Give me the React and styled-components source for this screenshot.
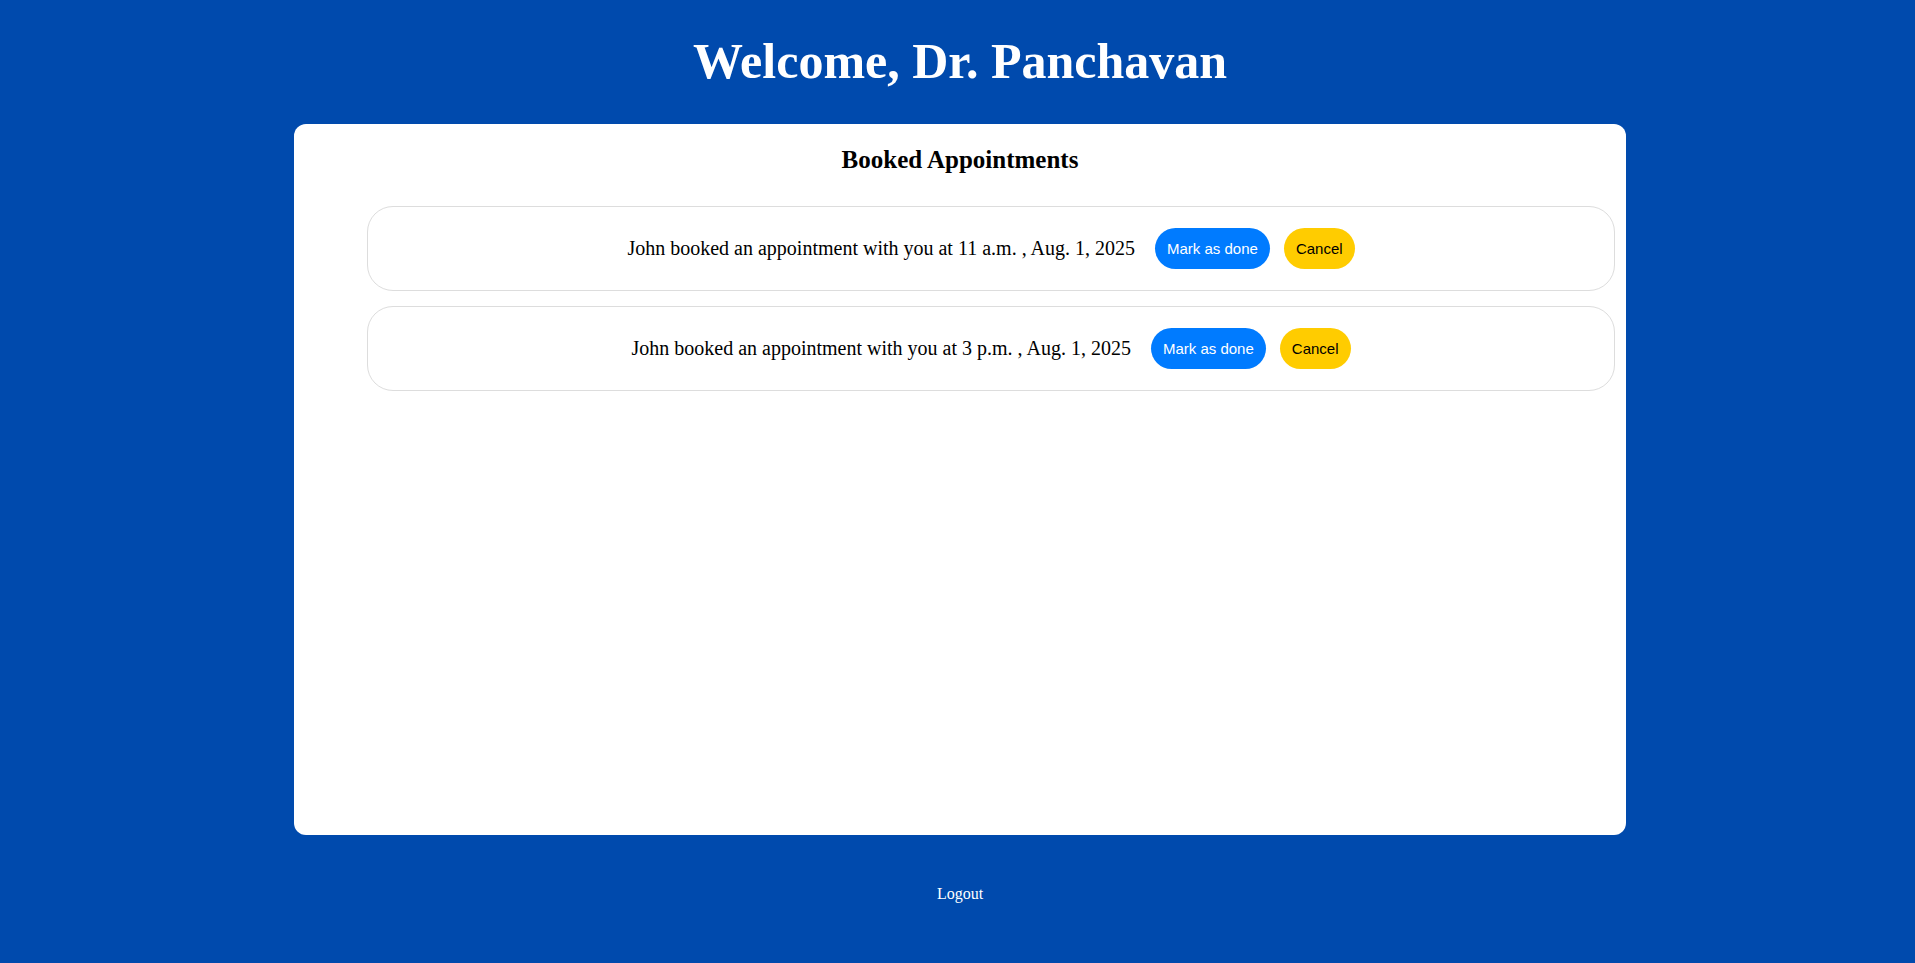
import React from "react";
import styled, { createGlobalStyle } from "styled-components";

const GlobalStyle = createGlobalStyle`
    html, body {
        margin: 0;
        padding: 0;
        background: #004aad;
    }
    body {
        font-family: "Liberation Serif", "Times New Roman", serif;
    }
`;

const Page = styled.div`
    min-height: 963px;
    box-sizing: border-box;
    padding: 33px 0 0 5px;
    display: flex;
    flex-direction: column;
    align-items: center;
`;

const Title = styled.h1`
    margin: 0;
    font-size: 50px;
    line-height: 56px;
    font-weight: 700;
    color: #ffffff;
`;

const Card = styled.div`
    width: 1332px;
    height: 711px;
    box-sizing: border-box;
    margin-top: 35px;
    padding-top: 22px;
    background: #ffffff;
    border-radius: 12px;
`;

const CardTitle = styled.h2`
    margin: 0;
    font-size: 25px;
    line-height: 28px;
    font-weight: 700;
    text-align: center;
    color: #000;
`;

const List = styled.ul`
    list-style: none;
    margin: 32px 11px 0 73px;
    padding: 0;
    display: flex;
    flex-direction: column;
    gap: 15px;
`;

const Row = styled.li`
    height: 85px;
    box-sizing: border-box;
    border: 1px solid #dddddd;
    border-radius: 26px;
    display: flex;
    align-items: center;
    justify-content: center;
`;

const RowText = styled.span`
    font-size: 20px;
    color: #000;
    margin-right: 20px;
`;

const Actions = styled.div`
    display: flex;
    gap: 14px;
`;

const PillButton = styled.button`
    border: none;
    border-radius: 21px;
    padding: 12px;
    font-family: "Liberation Sans", Arial, sans-serif;
    font-size: 15px;
    line-height: 17px;
    cursor: pointer;
    background: ${(p) => (p.$variant === "cancel" ? "#ffcc00" : "#007bff")};
    color: ${(p) => (p.$variant === "cancel" ? "#000" : "#fff")};
`;

const Logout = styled.button`
    margin-top: 50px;
    background: none;
    border: none;
    padding: 0;
    font-family: "Liberation Serif", "Times New Roman", serif;
    font-size: 16px;
    line-height: 18px;
    color: #ffffff;
    cursor: pointer;
`;

const appointments = [
    { id: 1, patient: "John", time: "11 a.m.", date: "Aug. 1, 2025" },
    { id: 2, patient: "John", time: "3 p.m.", date: "Aug. 1, 2025" },
];

export default function App() {
    return (
        <>
            <GlobalStyle />
            <Page>
                <Title>Welcome, Dr. Panchavan</Title>
                <Card>
                    <CardTitle>Booked Appointments</CardTitle>
                    <List>
                        {appointments.map((a) => (
                            <Row key={a.id}>
                                <RowText>
                                    {a.patient} booked an appointment with you at {a.time} , {a.date}
                                </RowText>
                                <Actions>
                                    <PillButton>Mark as done</PillButton>
                                    <PillButton $variant="cancel">Cancel</PillButton>
                                </Actions>
                            </Row>
                        ))}
                    </List>
                </Card>
                <Logout>Logout</Logout>
            </Page>
        </>
    );
}
